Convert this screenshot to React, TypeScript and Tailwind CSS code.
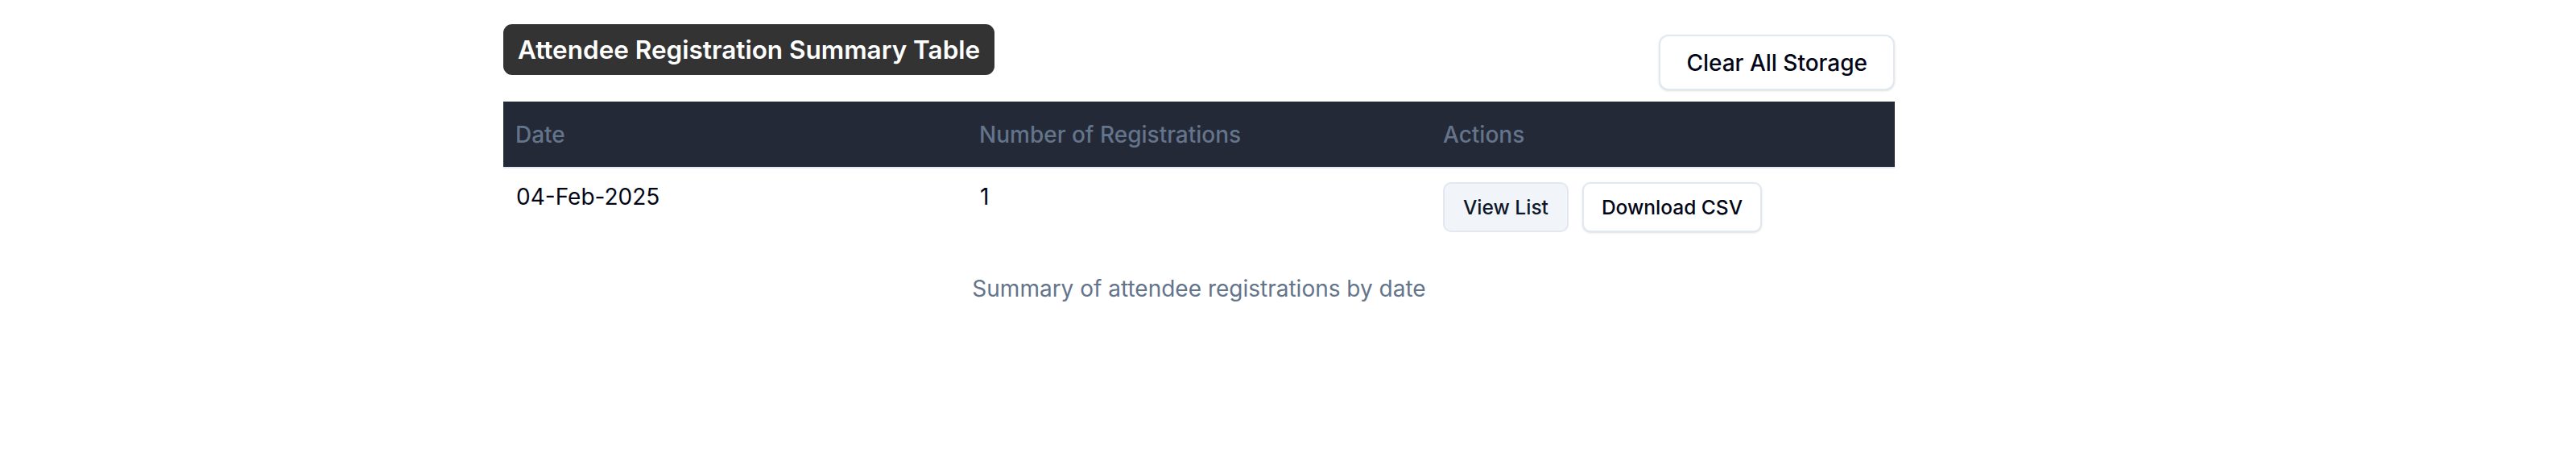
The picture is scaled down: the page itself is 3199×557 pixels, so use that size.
import React from 'react';

interface SummaryRow {
  date: string;
  count: number;
}

const rows: SummaryRow[] = [{ date: '04-Feb-2025', count: 1 }];

export default function App() {
  return (
    <div className="w-[3199px] h-[557px] bg-white font-['Inter','Noto_Sans',sans-serif] text-[#020617]">
      <div className="ml-[625px] w-[1728px] pt-[30px]">
        <div className="flex items-start justify-between">
          <h2 className="flex h-[63px] items-center rounded-[11px] bg-[#333333] px-[18px] text-[31.5px] font-semibold text-white">
            Attendee Registration Summary Table
          </h2>
          <button className="mt-[13px] h-[69px] rounded-[12px] border-2 border-[#e2e8f0] bg-white px-[32px] text-[28px] font-medium shadow-sm">
            Clear All Storage
          </button>
        </div>

        <table className="mt-[14px] w-full table-fixed caption-bottom border-collapse">
          <thead>
            <tr className="h-[82px] border-b-2 border-[#e2e8f0] bg-[#232936]">
              <th className="px-[15px] text-left align-middle text-[28px] font-medium text-[#64748b]">Date</th>
              <th className="px-[15px] text-left align-middle text-[28px] font-medium text-[#64748b]">Number of Registrations</th>
              <th className="px-[15px] text-left align-middle text-[28px] font-medium text-[#64748b]">Actions</th>
            </tr>
          </thead>
          <tbody>
            {rows.map((row) => (
              <tr key={row.date}>
                <td className="px-[16px] pt-[14px] pb-[14px] align-top text-[28px] leading-[42px]">{row.date}</td>
                <td className="px-[16px] pt-[14px] pb-[14px] align-top text-[28px] leading-[42px]">{row.count}</td>
                <td className="px-[15px] pt-[17px] pb-[14px] align-top">
                  <div className="flex gap-[17px]">
                    <button className="h-[62px] rounded-[10px] border-2 border-[#e2e8f0] bg-[#f1f5f9] px-[23px] text-[24.5px] font-medium text-[#0f172a]">
                      View List
                    </button>
                    <button className="h-[62px] rounded-[10px] border-2 border-[#e2e8f0] bg-white px-[22px] text-[24.5px] font-medium text-[#020617] shadow-sm">
                      Download CSV
                    </button>
                  </div>
                </td>
              </tr>
            ))}
          </tbody>
          <caption className="mt-[35px] text-[28px] leading-[42px] text-[#64748b]">
            Summary of attendee registrations by date
          </caption>
        </table>
      </div>
    </div>
  );
}
